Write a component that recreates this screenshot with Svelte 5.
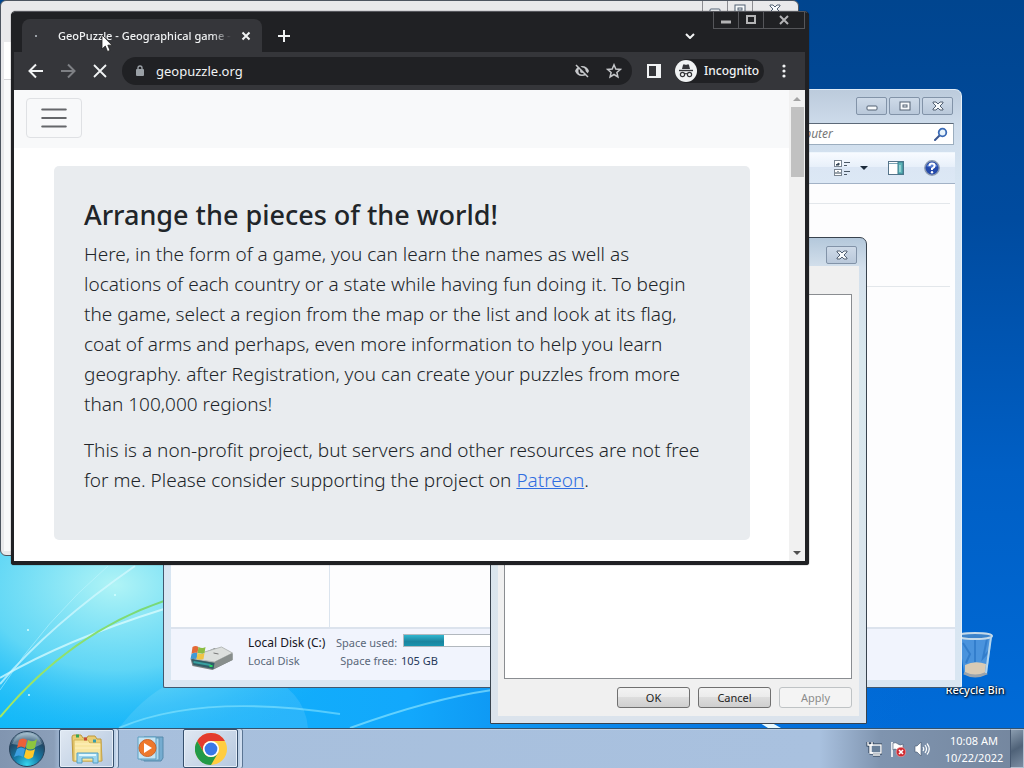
<script lang="ts">
	let address = $state('geopuzzle.org')
	let search = $state('Search Computer')
	const diskUsed = 28
</script>

{#snippet minGlyph()}
	<svg class="glyph" viewBox="0 0 12 10"><rect x="1" y="5" width="10" height="4" rx="1" /></svg>
{/snippet}

{#snippet maxGlyph()}
	<svg class="glyph" viewBox="0 0 12 10"><rect x="1" y="1" width="10" height="8" /><rect x="4" y="4" width="4" height="2" /></svg>
{/snippet}

{#snippet closeGlyph()}
	<svg class="glyph" viewBox="0 0 12 10"><path d="M1 1H4L6 3L8 1H11V2L8 5L11 8V9H8L6 7L4 9H1V8L4 5L1 2Z" /></svg>
{/snippet}

<div class="screen">
	<main class="desktop">
		<svg class="wallpaper" viewBox="0 0 1024 728" preserveAspectRatio="none" aria-hidden="true">
			<defs>
				<linearGradient id="sky" x1="0" y1="0" x2="0" y2="1">
					<stop offset="0" stop-color="#00458f" />
					<stop offset="0.3" stop-color="#004b9f" />
					<stop offset="0.65" stop-color="#005fc5" />
					<stop offset="1" stop-color="#006bd8" />
				</linearGradient>
				<linearGradient id="sea" x1="0" y1="0" x2="1" y2="0">
					<stop offset="0" stop-color="#10b8f8" />
					<stop offset="0.4" stop-color="#12a8fc" />
					<stop offset="0.7" stop-color="#087ce6" stop-opacity="0.8" />
					<stop offset="0.92" stop-color="#0068d4" stop-opacity="0" />
				</linearGradient>
				<radialGradient id="glow">
					<stop offset="0" stop-color="#b0f4f6" />
					<stop offset="0.5" stop-color="#73def5" stop-opacity="0.8" />
					<stop offset="1" stop-color="#18b8fa" stop-opacity="0" />
				</radialGradient>
				<linearGradient id="leaf" x1="0" y1="1" x2="1" y2="0">
					<stop offset="0" stop-color="#a6e860" />
					<stop offset="1" stop-color="#76d878" />
				</linearGradient>
			</defs>
			<rect width="1024" height="728" fill="url(#sky)" />
			<rect y="200" width="1024" height="528" fill="url(#sea)" />
			<ellipse cx="115" cy="585" rx="260" ry="170" fill="url(#glow)" />
			<path d="M119 728Q175 655 260 672Q305 690 308 728" fill="#fff" opacity="0.1" />
			<path d="M0 678Q65 640 164 609" fill="none" stroke="#e2ffff" stroke-width="2" opacity="0.7" />
			<path d="M0 684Q50 625 135 566" fill="none" stroke="#d5faff" stroke-width="2" opacity="0.7" />
			<path d="M0 690Q45 620 108 566" fill="none" stroke="#c8f7ff" opacity="0.5" />
			<path d="M0 717Q70 633 164 601" fill="none" stroke="url(#leaf)" stroke-width="2" />
			<path d="M119 728Q200 693 340 714" fill="none" stroke="#9aedff" stroke-width="2" opacity="0.5" />
			<path d="M350 728Q430 699 492 690" fill="none" stroke="#9aedff" stroke-width="2" opacity="0.6" />
			<path d="M760 723H772L781 728H768Z" fill="#e8faff" />
			<g fill="#d5ffff"><circle cx="28" cy="630" r="1" /><circle cx="115" cy="595" r="1" /><circle cx="29" cy="695" r="1" /></g>
		</svg>

		<a class="recycle" href="#recycle">
			<svg viewBox="0 0 40 48">
				<path d="M4 4H37L32 43Q20 49 9 43Z" fill="#5c9fe0" opacity="0.8" />
				<path d="M10 34Q20 29 31 33L30 43Q20 47 10 43Z" fill="#d9cbb5" />
				<path d="M9 42Q20 48 32 42" fill="none" stroke="#9ba4ac" stroke-width="3" />
				<path d="M8 12L15 23L11 32M32 8L28 27L35 19M20 9V31" fill="none" stroke="#256fc2" stroke-width="2" opacity="0.6" />
				<ellipse cx="20" cy="5" rx="17" ry="3" fill="#3c83ca" stroke="#c5dae9" stroke-width="2" />
				<path d="M36 6L31 42" stroke="#b5d6ee" stroke-width="2" />
			</svg>
			<span>Recycle Bin</span>
		</a>

		<section class="window back-window" aria-label="Background window">
			<div class="back-controls">
				<button aria-label="Minimize">{@render minGlyph()}</button>
				<button aria-label="Maximize">{@render maxGlyph()}</button>
				<button aria-label="Close">{@render closeGlyph()}</button>
			</div>
			<div class="back-title"></div>
			<div class="back-bar"></div>
			<div class="back-body"></div>
		</section>

		<section class="window explorer" aria-label="Computer">
			<header class="caption">
				<button aria-label="Minimize">{@render minGlyph()}</button>
				<button aria-label="Maximize">{@render maxGlyph()}</button>
				<button aria-label="Close">{@render closeGlyph()}</button>
			</header>
			<label class="search">
				<input aria-label="Search Computer" bind:value={search} />
				<svg viewBox="0 0 14 14"><path d="M1 13L6 8" stroke="#3a5690" stroke-width="2" stroke-linecap="round" /><circle cx="8.5" cy="5.5" r="3.8" fill="#e8f4fc" stroke="#3a6ab5" stroke-width="1.8" /></svg>
			</label>
			<div class="tools">
				<button class="views" aria-label="Change your view">
					<svg viewBox="0 0 34 16">
						<g fill="#fff" stroke="#7a8591"><rect x="0.5" y="0.5" width="7" height="6" /><rect x="0.5" y="9.5" width="7" height="6" /></g>
						<path d="M2 5L5 3V5ZM2 12V14M4 11V14M6 12V14" fill="#345" stroke="#345" />
						<path d="M10 2.5H16M10 5.5H13M10 11.5H16M10 14.5H13" stroke="#4b5865" />
						<path d="M26 6H34L30 10Z" fill="#1d2b3b" />
					</svg>
				</button>
				<button aria-label="Show the preview pane">
					<svg viewBox="0 0 16 14"><rect x="0.5" y="0.5" width="15" height="13" fill="#fff" stroke="#56748a" /><path d="M1 2.5H15" stroke="#7da5b6" /><rect x="10" y="1" width="5" height="12" fill="#5bb3b6" stroke="#3b7b8c" /><path d="M12 4V11" stroke="#c8eeee" /></svg>
				</button>
				<button aria-label="Get help">
					<svg viewBox="0 0 16 16"><circle cx="8" cy="8" r="7.2" fill="#2449aa" stroke="#8d9bb0" stroke-width="1.4" /><path d="M2 6Q8 0 14 6Q8 9 2 6" fill="#7da2ea" opacity="0.6" /><path d="M5.5 6Q5.5 3.6 8 3.6Q10.6 3.6 10.6 5.8Q10.6 7.2 8 8.7V10" fill="none" stroke="#fff" stroke-width="2" /><circle cx="8" cy="12.3" r="1.2" fill="#fff" /></svg>
				</button>
			</div>
			<div class="files">
				<nav></nav>
				<div class="banner"></div>
			</div>
			<footer class="details">
				<svg class="drive" viewBox="0 0 44 26">
					<path d="M1 14L25 3L43 9V15L23 25L3 21Z" fill="#7b8181" />
					<path d="M15 7L32 2L43 8L25 17L5 14Z" fill="#dcdfdd" stroke="#b5b9b8" />
					<path d="M25 17L43 8V15L24 24Z" fill="#888e8c" />
					<path d="M2 14L25 18L24 24L4 20Z" fill="#315d67" />
					<path d="M4 17L21 20" stroke="#38a0a0" stroke-width="2" /><rect x="20" y="20" width="3" height="2" fill="#27d965" />
					<path d="M3 2Q6 0 9 2L8 8Q5 7 2 9Z" fill="#e36a37" /><path d="M9 2Q13 4 16 2L15 8Q12 9 8 8Z" fill="#8bbd43" /><path d="M2 9Q5 7 8 8L7 14Q4 13 1 14Z" fill="#4099d5" /><path d="M8 8Q12 10 15 8L14 14Q11 15 7 14Z" fill="#f0c444" />
					<path d="M24 8L29 9" stroke="#777" />
				</svg>
				<div class="disk"><strong>Local Disk (C:)</strong><span>Local Disk</span></div>
				<dl>
					<dt>Space used:</dt><dd><span class="meter"><span style="width: {diskUsed}%"></span></span></dd>
					<dt>Space free:</dt><dd>105 GB</dd>
				</dl>
			</footer>
		</section>

		<section class="window dialog" aria-label="Properties">
			<header class="caption"><button aria-label="Close">{@render closeGlyph()}</button></header>
			<div class="dialog-body">
				<div class="sheet"></div>
				<div class="actions"><button>OK</button><button>Cancel</button><button disabled>Apply</button></div>
			</div>
		</section>

		<section class="window browser" aria-label="GeoPuzzle browser">
			<header class="tabs">
				<div class="tab">
					<span class="loading"></span>
					<span class="tab-title">GeoPuzzle - Geographical game -</span>
					<button aria-label="Close tab"><svg viewBox="0 0 10 10"><path d="M1.5 1.5L8.5 8.5M8.5 1.5L1.5 8.5" /></svg></button>
				</div>
				<button class="new-tab" aria-label="New tab"><svg viewBox="0 0 12 12"><path d="M6 0V12M0 6H12" /></svg></button>
				<button class="tab-menu" aria-label="Search tabs"><svg viewBox="0 0 10 6"><path d="M1 1L5 5L9 1" /></svg></button>
				<div class="browser-controls">
					<button aria-label="Minimize"><svg viewBox="0 0 12 10"><path d="M1 7H11" stroke-width="3" /></svg></button>
					<button aria-label="Maximize"><svg viewBox="0 0 12 10"><rect x="2" y="1" width="8" height="7" stroke-width="2" /></svg></button>
					<button aria-label="Close"><svg viewBox="0 0 12 10"><path d="M2 1L10 9M10 1L2 9" stroke-width="2" /></svg></button>
				</div>
			</header>
			<div class="nav-bar">
				<button aria-label="Back"><svg viewBox="0 0 16 16"><path d="M15 8H2M8 1.5L1.5 8L8 14.5" /></svg></button>
				<button class="dim" aria-label="Forward"><svg viewBox="0 0 16 16"><path d="M1 8H14M8 1.5L14.5 8L8 14.5" /></svg></button>
				<button aria-label="Stop"><svg viewBox="0 0 16 16"><path d="M2 2L14 14M14 2L2 14" stroke-width="1.8" /></svg></button>
				<div class="address">
					<svg class="lock" viewBox="0 0 10 12"><rect x="1" y="4" width="8" height="7" rx="1" fill="#9aa0a6" /><path d="M3 5V3Q3 1 5 1T7 3V5" fill="none" stroke="#9aa0a6" stroke-width="1.4" /></svg>
					<input aria-label="Address" bind:value={address} />
					<button aria-label="Cookies blocked"><svg viewBox="0 0 16 16"><path d="M1 8Q3 3 8 3T15 8Q13 13 8 13T1 8Z" fill="#c5c7ca" stroke="none" /><circle cx="8" cy="8" r="3.6" fill="#202124" stroke="none" /><circle cx="8" cy="8" r="2" fill="#c5c7ca" stroke="none" /><path d="M3 1L15 13" stroke="#202124" stroke-width="2" /><path d="M2 2L14 14" stroke="#c5c7ca" stroke-width="1.5" /></svg></button>
					<button aria-label="Bookmark this tab"><svg viewBox="0 0 16 16"><path d="M8 1.8L9.8 6L14.3 6.4L10.9 9.4L11.9 13.9L8 11.5L4.1 13.9L5.1 9.4L1.7 6.4L6.2 6Z" fill="none" stroke="#c5c7ca" stroke-width="1.5" /></svg></button>
				</div>
				<button class="side" aria-label="Side panel"><svg viewBox="0 0 16 16"><path d="M1 1H15V15H1ZM3 3V13H10V3Z" fill="#f1f3f4" fill-rule="evenodd" stroke="none" /></svg></button>
				<button class="incognito">
					<svg viewBox="0 0 22 22"><circle cx="11" cy="11" r="11" fill="#f1f3f4" /><path d="M7 9L8 5Q8.500 4 9.500 4.500Q11 5 12.500 4.500Q13.500 4 14 5L15 9Z" fill="#35363a" /><path d="M4 10.500H18" stroke="#35363a" stroke-width="1.4" /><g fill="none" stroke="#35363a" stroke-width="1.2"><circle cx="7.5" cy="14.5" r="2.1" /><circle cx="14.5" cy="14.5" r="2.1" /><path d="M9.600 14Q11 13 12.400 14" /></g></svg>
					Incognito
				</button>
				<button class="more" aria-label="Menu"><svg viewBox="0 0 4 14"><g fill="#f1f3f4" stroke="none"><circle cx="2" cy="2" r="1.6" /><circle cx="2" cy="7" r="1.6" /><circle cx="2" cy="12" r="1.6" /></g></svg></button>
			</div>
			<div class="viewport">
				<article>
					<nav class="site-nav">
						<button aria-label="Toggle navigation"><svg viewBox="0 0 30 30"><path d="M4 7H26M4 15H26M4 23H26" stroke="#65676a" stroke-width="2" stroke-linecap="round" /></svg></button>
					</nav>
					<div class="intro">
						<h1>Arrange the pieces of the world!</h1>
						<p>Here, in the form of a game, you can learn the names as well as locations of each country or a state while having fun doing it. To begin the game, select a region from the map or the list and look at its flag, coat of arms and perhaps, even more information to help you learn geography. after Registration, you can create your puzzles from more than 100,000 regions!</p>
						<p>This is a non-profit project, but servers and other resources are not free for me. Please consider supporting the project on <a href="#patreon">Patreon</a>.</p>
					</div>
				</article>
				<div class="scrollbar">
					<button aria-label="Scroll up"><svg viewBox="0 0 8 4"><path d="M0 4L4 0L8 4Z" fill="#a3a3a3" stroke="none" /></svg></button>
					<div class="thumb"></div>
					<button class="down" aria-label="Scroll down"><svg viewBox="0 0 8 4"><path d="M0 0L4 4L8 0Z" fill="#505050" stroke="none" /></svg></button>
				</div>
			</div>
		</section>

		<svg class="pointer" viewBox="0 0 12 19" aria-hidden="true"><path d="M1 1V15L4.300 12L6.500 17.500L9 16.400L6.800 11.200H11Z" fill="#fff" stroke="#222" stroke-width="0.8" /></svg>
	</main>

	<footer class="taskbar">
		<button class="start" aria-label="Start">
			<svg viewBox="0 0 38 38">
				<defs><radialGradient id="orb" cx="0.5" cy="0.95" r="0.9"><stop offset="0" stop-color="#35d6ee" /><stop offset="0.4" stop-color="#167da9" /><stop offset="0.8" stop-color="#214765" /><stop offset="1" stop-color="#8daabd" /></radialGradient></defs>
				<circle cx="19" cy="19" r="17.500" fill="url(#orb)" stroke="#28425b" />
				<path d="M4 14Q8 3 19 3T34 14Q25 19 19 17T4 14Z" fill="#d7e9f1" opacity="0.35" />
				<path d="M11 10Q15 7 19 10L17 18Q13 15 9 18Z" fill="#ec6038" /><path d="M20 10Q25 13 29 9L27 18Q22 21 18 18Z" fill="#8dc63f" /><path d="M9 19Q13 16 17 19L15 27Q11 24 6 27Z" fill="#3c9fe0" /><path d="M18 19Q22 22 27 19L25 27Q20 31 16 27Z" fill="#ffc829" />
			</svg>
		</button>
		<button class="task active folder" aria-label="Windows Explorer">
			<svg viewBox="0 0 34 32">
				<path d="M2 4Q2 2 4 2H11L13 5H17L18 3H25L27 6H31L32 28H3Z" fill="#e9cd73" stroke="#bd983f" />
				<path d="M4 7H18L20 10H31V28H4Z" fill="#f8e6a0" stroke="#d3b355" /><path d="M5 11H30M5 15H30" stroke="#fff2bf" />
				<path d="M6 3H9" stroke="#37a552" stroke-width="3" /><path d="M14 6H17" stroke="#c54b37" stroke-width="3" /><path d="M23 8H26" stroke="#389eac" stroke-width="3" />
				<path d="M7 30V20H28V30H23V25H12V30Z" fill="#9ed6ee" stroke="#539fc7" /><path d="M9 22H26" stroke="#e1f7ff" stroke-width="2" />
			</svg>
		</button>
		<button class="task media" aria-label="Windows Media Player">
			<svg viewBox="0 0 28 26"><path d="M7 1H26V22L24 25H7Z" fill="#75acd0" stroke="#578aac" /><path d="M4 2H22V24H4Z" fill="#afd8ed" stroke="#6296b4" /><path d="M1 1H19V23H1Z" fill="#c5e4f3" stroke="#5d9fc2" /><circle cx="10.500" cy="12" r="8.500" fill="#ee782b" stroke="#c76630" /><path d="M7 7V17L15 12Z" fill="#fff" /></svg>
		</button>
		<button class="task active chrome" aria-label="Google Chrome">
			<svg viewBox="0 0 32 32"><circle cx="16" cy="16" r="16" fill="#ffcd40" /><path d="M2.140 8A16 16 0 0 1 29.860 8H16A8 8 0 0 0 9.070 20Z" fill="#e33b2e" /><path d="M2.140 8A16 16 0 0 0 16 32L22.930 20A8 8 0 0 1 9.070 20Z" fill="#229a48" /><circle cx="16" cy="16" r="8" fill="#fff" /><circle cx="16" cy="16" r="6.400" fill="#3978e6" /></svg>
		</button>
		<div class="tray">
			<button aria-label="Network"><svg viewBox="0 0 16 16"><g fill="none" stroke="#26384e" stroke-width="3"><rect x="5" y="4" width="10" height="8" /><path d="M7 14H14M2 1V4H6V1M4 4V12" /></g><g fill="none" stroke="#fff" stroke-width="1.4"><rect x="5" y="4" width="10" height="8" fill="#687f99" /><path d="M7 14H14M2 1V4H6V1M4 4V12H7" /></g></svg></button>
			<button aria-label="Action Center"><svg viewBox="0 0 16 16"><path d="M2 1V16" stroke="#fff" stroke-width="1.600" /><path d="M3 2Q6 1 8 3T13 3V10Q9 11 7 9T3 9Z" fill="#fff" stroke="#45556b" stroke-width="0.6" /><circle cx="11" cy="11" r="4.800" fill="#d02b32" stroke="#f0b0b0" stroke-width="0.6" /><path d="M9 9L13 13M13 9L9 13" stroke="#fff" stroke-width="1.600" /></svg></button>
			<button aria-label="Volume"><svg viewBox="0 0 16 16"><path d="M1 5H3L7 1V15L3 11H1Z" fill="#fff" stroke="#45556b" stroke-width="0.6" /><path d="M9 6Q10.500 8 9 10M11 4Q14 8 11 12M13 2.500Q17.500 8 13 13.500" fill="none" stroke="#fff" stroke-width="1.200" /></svg></button>
			<time><span>10:08 AM</span><span>10/22/2022</span></time>
		</div>
		<button class="show-desktop" aria-label="Show desktop"></button>
	</footer>
</div>

<style>
	:global(body) {
		overflow: hidden;
	}

	.screen {
		height: 100vh;
		display: flex;
		flex-direction: column;
		font-family: 'Noto Sans', sans-serif;
		font-size: 12px;
		line-height: 18px;
		color: #1e1e1e;
		overflow: hidden;
	}

	.screen * {
		box-sizing: border-box;
	}

	button,
	input {
		font: inherit;
		color: inherit;
		padding: 0;
		margin: 0;
		border: 0;
		background: none;
	}

	button {
		display: flex;
		align-items: center;
		justify-content: center;
	}

	svg {
		display: block;
		flex-shrink: 0;
	}

	.desktop {
		position: relative;
		flex: 1;
		min-height: 0;
		overflow: hidden;
	}

	.wallpaper {
		position: absolute;
		width: 100%;
		height: 100%;
	}

	.window {
		position: absolute;
		display: flex;
		flex-direction: column;
	}

	.glyph {
		width: 12px;
		height: 10px;
		fill: #f7fafc;
		stroke: #526073;
		stroke-width: 1;
	}

	.recycle {
		position: absolute;
		right: 10px;
		top: 631px;
		width: 78px;
		display: flex;
		flex-direction: column;
		align-items: center;
		gap: 2px;
		color: #fff;
		text-decoration: none;
		text-shadow: 1px 1px 2px #000, 0 0 2px #000;
		font-size: 11px;
		font-weight: 500;
		white-space: nowrap;
	}

	.recycle svg {
		width: 40px;
		height: 48px;
	}

	/* background window */
	.back-window {
		left: 0;
		top: 0;
		width: 799px;
		height: 556px;
		background: #e9e9eb;
		border: 1px solid #4e5560;
		border-radius: 6px;
		padding: 0 4px 4px 3px;
	}

	.back-controls {
		position: absolute;
		right: 2px;
		top: 0;
		display: flex;
	}

	.back-controls button {
		width: 25px;
		height: 16px;
		border: 1px solid #8c8c91;
		border-top: 0;
		border-right: 0;
	}

	.back-controls button:last-child {
		width: 44px;
	}

	.back-title {
		height: 41px;
	}

	.back-bar {
		height: 38px;
		background: #fff;
		border-bottom: 1px solid #d5d5d8;
	}

	.back-body {
		flex: 1;
		background: #f9f9fa;
	}

	/* explorer */
	.explorer {
		left: 163px;
		top: 89px;
		width: 799px;
		height: 599px;
		padding: 0 6px 7px 7px;
		background: linear-gradient(#bccbdc, #cfddec 38px, #d7e5f2 90px, #d9e6f2);
		border: 1px solid #41586f;
		border-right-color: #e4f0fa;
		border-top-color: #dfebf6;
		border-radius: 7px 7px 2px 2px;
	}

	.caption {
		display: flex;
		justify-content: flex-end;
		gap: 2px;
	}

	.caption button {
		width: 31px;
		height: 18px;
		border: 1px solid #8293a8;
		border-radius: 2px;
		background: linear-gradient(#cedae8, #b9c8da);
	}

	.explorer .caption {
		padding: 7px 2px 8px 0;
	}

	.search {
		align-self: flex-end;
		display: flex;
		align-items: center;
		width: 218px;
		height: 22px;
		margin-right: 1px;
		padding: 0 5px 0 4px;
		border: 1px solid #9caebf;
		border-top-color: #5c6978;
		background: #fff;
	}

	.search input {
		flex: 1;
		min-width: 0;
		font-size: 12px;
		font-style: italic;
		color: #777;
	}

	.search svg {
		width: 14px;
		height: 14px;
	}

	.tools {
		display: flex;
		align-items: center;
		justify-content: flex-end;
		gap: 20px;
		height: 32px;
		margin-top: 7px;
		padding-right: 15px;
		border-top: 1px solid #eff6fc;
		border-bottom: 1px solid #a2b2c6;
		background: linear-gradient(#f8fbff, #e8f0fa 45%, #dbe6f4 46%, #dce8f5);
	}

	.tools svg {
		width: 16px;
		height: 16px;
	}

	.tools .views svg {
		width: 34px;
	}

	.files {
		flex: 1;
		display: flex;
		background: #fdfdfe;
	}

	.files nav {
		width: 159px;
		border-right: 1px solid #dbe4ee;
	}

	.banner {
		flex: 1;
		height: 84px;
		margin: 19px 5px 0;
		border: solid #e3e7eb;
		border-width: 1px 0;
	}

	.details {
		display: flex;
		align-items: center;
		gap: 14px;
		height: 53px;
		padding: 0 18px 6px;
		border-top: 2px solid #dce3ed;
		background: #f1f4fd;
		color: #5a6779;
	}

	.drive {
		width: 45px;
		height: 26px;
		margin-top: 12px;
	}

	.disk {
		display: flex;
		flex-direction: column;
		width: 74px;
		white-space: nowrap;
		font-size: 11px;
	}

	.disk strong {
		color: #16161f;
		font-weight: 400;
		font-size: 12px;
	}

	.details dl {
		display: grid;
		grid-template-columns: 61px 160px;
		column-gap: 4px;
		margin: 0;
		font-size: 11px;
		text-align: right;
		white-space: nowrap;
	}

	.details dd {
		margin: 0;
		color: #26395a;
		text-align: left;
	}

	.meter {
		display: flex;
		width: 145px;
		height: 13px;
		margin-left: 2px;
		border: 1px solid #b2b8be;
		background: #fff;
	}

	.meter span {
		background: linear-gradient(#30b6cf, #1b849e 60%, #1894ae);
	}

	/* properties dialog */
	.dialog {
		left: 490px;
		top: 237px;
		width: 377px;
		height: 487px;
		padding: 0 7px 7px;
		background: linear-gradient(#b4c8db, #d4e0ec 30px, #d9e8ee 120px, #dbe3ec);
		border: 1px solid #39434e;
		border-radius: 7px 7px 1px 1px;
	}

	.dialog .caption {
		padding: 8px 2px 2px 0;
	}

	.dialog-body {
		flex: 1;
		display: flex;
		flex-direction: column;
		gap: 8px;
		padding: 28px 7px 8px 6px;
		background: #f0f0f0;
	}

	.sheet {
		flex: 1;
		border: 1px solid #8a8d91;
		background: #fff;
	}

	.actions {
		display: flex;
		justify-content: flex-end;
		gap: 8px;
	}

	.actions button {
		width: 73px;
		height: 21px;
		border: 1px solid #707070;
		border-radius: 3px;
		background: linear-gradient(#f3f3f3, #ebebeb 49%, #dddddd 50%, #cfcfcf);
		font-size: 11px;
	}

	.actions button:disabled {
		border-color: #bfc3c5;
		background: #f4f4f4;
		color: #8b8b8b;
	}

	/* browser */
	.browser {
		left: 11px;
		top: 11px;
		width: 798px;
		height: 554px;
		padding: 0 3px 3px 2px;
		border: 1px solid #202124;
		border-top-color: #55565c;
		border-radius: 5px 5px 3px 3px;
		background: #202124;
		color: #f1f3f4;
		box-shadow: 0 0 1px #000;
	}

	.tabs {
		display: flex;
		align-items: flex-end;
		height: 40px;
		padding-left: 8px;
	}

	.tab {
		display: flex;
		align-items: center;
		width: 240px;
		height: 33px;
		padding: 0 10px;
		border-radius: 8px 8px 0 0;
		background: #35363a;
	}

	.loading {
		width: 2px;
		height: 2px;
		margin: 0 21px 0 3px;
		background: #9aa0a6;
	}

	.tab-title {
		flex: 1;
		overflow: hidden;
		white-space: nowrap;
		font-size: 11px;
		font-weight: 500;
		mask-image: linear-gradient(90deg, #000 88%, transparent);
	}

	.browser button svg {
		fill: none;
		stroke: #f1f3f4;
		stroke-width: 2;
	}

	.tab button {
		width: 20px;
		height: 20px;
		margin-left: 4px;
		margin-right: -4px;
	}

	.tab svg {
		width: 10px;
		height: 10px;
	}

	.new-tab {
		width: 44px;
		height: 33px;
	}

	.new-tab svg {
		width: 12px;
		height: 12px;
	}

	.tab-menu {
		margin-left: auto;
		width: 24px;
		height: 33px;
	}

	.tab-menu svg {
		width: 10px;
		height: 6px;
	}

	.browser-controls {
		align-self: flex-start;
		display: flex;
		margin-left: 11px;
	}

	.browser-controls button {
		width: 25px;
		height: 17px;
		border: solid #55565a;
		border-width: 0 0 1px 1px;
	}

	.browser-controls button:last-child {
		width: 42px;
		border-right-width: 1px;
	}

	.browser .browser-controls svg {
		width: 12px;
		height: 10px;
		stroke: #b4b4b6;
	}

	.nav-bar {
		display: flex;
		align-items: center;
		height: 38px;
		padding: 0 9px 1px 6px;
		background: #35363a;
	}

	.nav-bar > button {
		width: 32px;
		height: 28px;
	}

	.nav-bar svg {
		width: 16px;
		height: 16px;
	}

	.nav-bar .dim svg {
		stroke: #7e8084;
	}

	.address {
		flex: 1;
		display: flex;
		align-items: center;
		height: 28px;
		margin-left: 6px;
		padding: 0 2px 0 13px;
		border-radius: 14px;
		background: #202124;
	}

	.address .lock {
		width: 10px;
		height: 12px;
		margin-right: 11px;
	}

	.address input {
		flex: 1;
		min-width: 0;
		font-size: 13px;
	}

	.address button {
		width: 32px;
		height: 28px;
	}

	.nav-bar .side {
		width: 43px;
	}

	.nav-bar .incognito {
		width: 89px;
		height: 24px;
		justify-content: flex-start;
		gap: 7px;
		border-radius: 12px;
		background: #202124;
		font-weight: 500;
	}

	.nav-bar .incognito svg {
		width: 22px;
		height: 22px;
		stroke: none;
	}

	.nav-bar .more {
		width: 24px;
		margin-left: 8px;
	}

	.nav-bar .more svg {
		width: 4px;
		height: 14px;
	}

	.viewport {
		flex: 1;
		min-height: 0;
		display: flex;
		background: #fff;
		color: #212529;
	}

	article {
		flex: 1;
	}

	.site-nav {
		height: 58px;
		padding: 8px 12px;
		background: #f8f9fa;
	}

	.site-nav button {
		width: 56px;
		height: 40px;
		border: 1px solid #dfe1e4;
		border-radius: 4px;
	}

	.site-nav svg {
		width: 32px;
		height: 32px;
	}

	.intro {
		margin: 18px 39px 0 40px;
		height: 374px;
		padding: 32px 44px 32px 30px;
		border-radius: 5px;
		background: #e9ecef;
		font-size: 19px;
		font-weight: 300;
		line-height: 30px;
	}

	.intro h1 {
		margin: 0 0 7px;
		font-size: 27px;
		line-height: 34px;
		font-weight: 500;
	}

	.intro p {
		margin: 0 0 16px;
	}

	.intro a {
		color: #2f6de0;
	}

	.scrollbar {
		width: 16px;
		display: flex;
		flex-direction: column;
		align-items: center;
		background: #f1f1f1;
	}

	.scrollbar button {
		width: 16px;
		height: 17px;
	}

	.scrollbar svg {
		width: 8px;
		height: 4px;
	}

	.thumb {
		width: 13px;
		height: 70px;
		background: #c1c1c1;
	}

	.scrollbar .down {
		margin-top: auto;
	}

	.pointer {
		position: absolute;
		left: 101px;
		top: 34px;
		width: 12px;
		height: 19px;
	}

	/* taskbar */
	.taskbar {
		display: flex;
		align-items: stretch;
		height: 40px;
		border-top: 1px solid #34536f;
		background: linear-gradient(90deg, #8195b0, #8b9fb9 54px, #a7bfdc 62px, #a9c1df 80%, #7f94af 86%, #74869e);
		box-shadow: inset 0 1px #bed1e5;
	}

	.start {
		width: 54px;
	}

	.start svg {
		width: 38px;
		height: 38px;
	}

	.task {
		width: 55px;
		margin-left: 5px;
		border-radius: 2px;
	}

	.task.active {
		width: 55px;
		border: 1px solid #37506d;
		background: linear-gradient(135deg, #e0e8f2, #b5c8df);
		box-shadow: inset 0 0 0 1px #e5eef8, 2px 0 #bcd0e6, 4px 0 #d0def0, 5px 0 #5b7593;
	}

	.task svg {
		width: 34px;
		height: 32px;
	}

	.task.media {
		width: 60px;
		margin-left: 7px;
	}

	.task.media svg {
		width: 28px;
		height: 26px;
	}

	.task.chrome {
		margin-left: 2px;
	}

	.task.chrome svg {
		width: 32px;
		height: 32px;
	}

	.tray {
		display: flex;
		align-items: center;
		gap: 8px;
		margin-left: auto;
		color: #fff;
	}

	.tray svg {
		width: 16px;
		height: 16px;
	}

	time {
		display: flex;
		flex-direction: column;
		align-items: center;
		width: 72px;
		font-size: 11px;
		line-height: 17px;
	}

	.show-desktop {
		width: 14px;
		border: 1px solid #b3c0d0;
		border-left-color: #465870;
		background: linear-gradient(150deg, #8a9caf, #4f6278 50%, #7b8da2);
	}
</style>
